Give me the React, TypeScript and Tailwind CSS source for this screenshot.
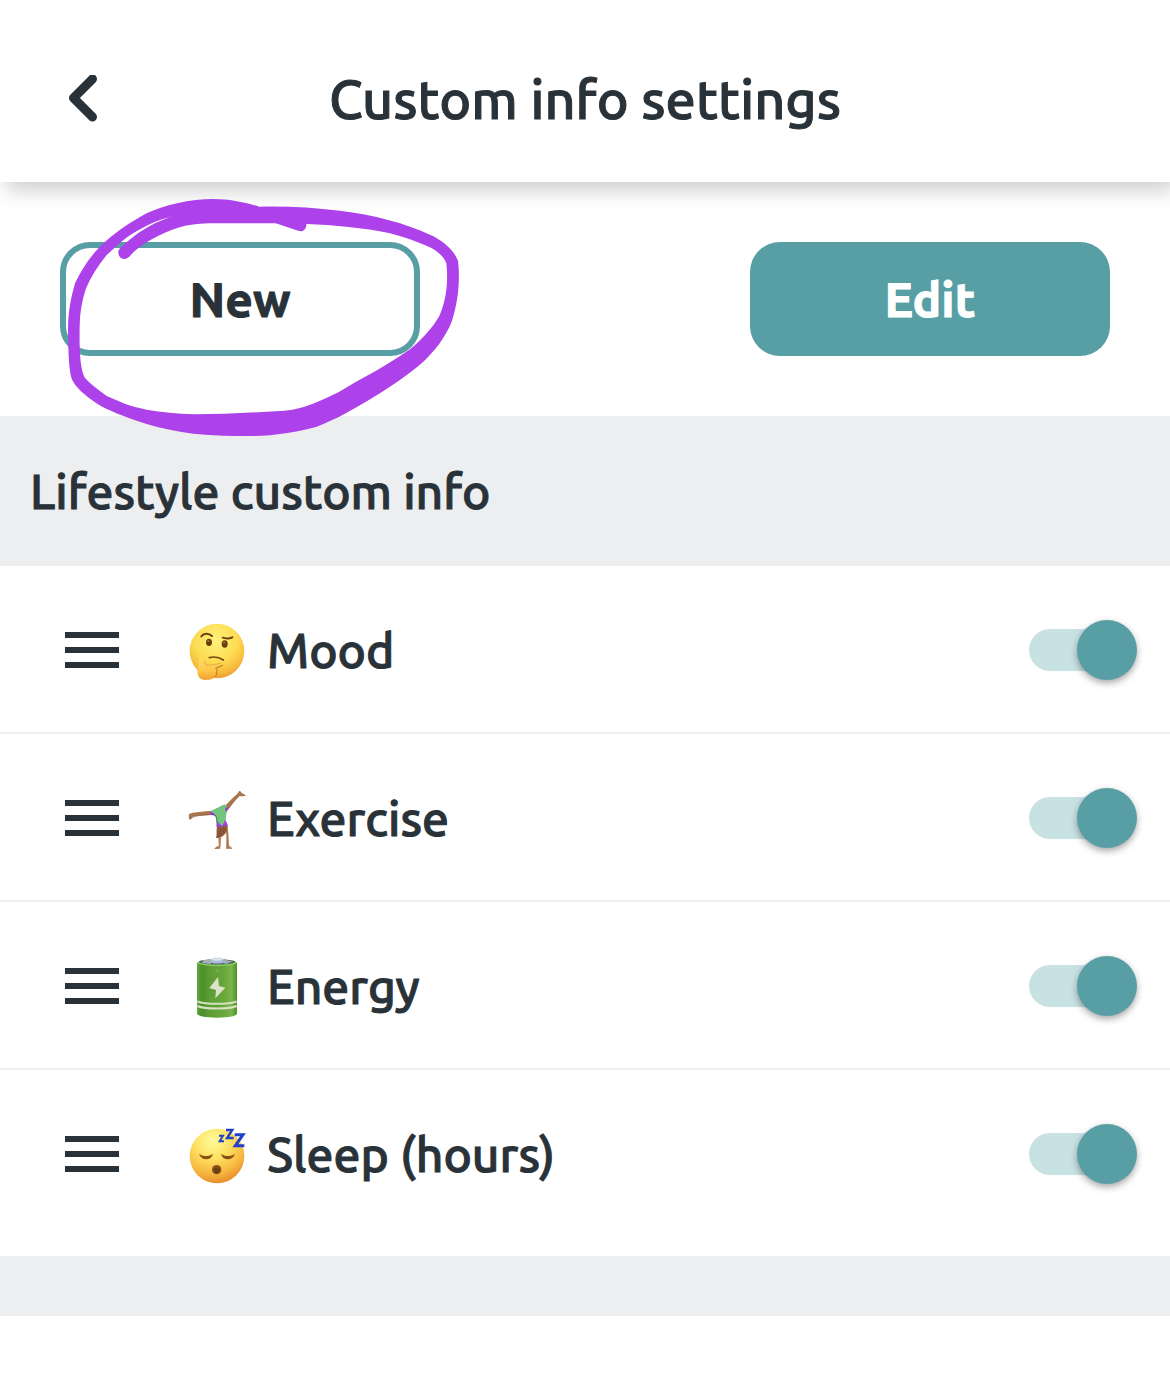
import { useState } from 'react';

const ThinkingFace = () => (
  <svg viewBox="45 24 192 192" className="h-16 w-16 shrink-0" aria-hidden="true">
    <defs>
      <radialGradient id="thinkFace" cx="0.48" cy="0.3" r="0.72">
        <stop offset="0" stopColor="#fff27d" />
        <stop offset="0.55" stopColor="#fcdc52" />
        <stop offset="0.85" stopColor="#f6b83a" />
        <stop offset="1" stopColor="#e8962f" />
      </radialGradient>
      <linearGradient id="thinkHand" x1="0" y1="0" x2="0" y2="1">
        <stop offset="0" stopColor="#ffe06a" />
        <stop offset="0.6" stopColor="#fcc548" />
        <stop offset="1" stopColor="#ee9f30" />
      </linearGradient>
    </defs>
    <circle cx="141" cy="123" r="82" fill="url(#thinkFace)" />
    <ellipse cx="117" cy="97" rx="9" ry="11" fill="#6b3c0b" />
    <ellipse cx="164" cy="102" rx="9" ry="11" fill="#6b3c0b" />
    <circle cx="115" cy="93" r="3" fill="#a57432" />
    <circle cx="162" cy="98" r="3" fill="#a57432" />
    <path d="M94 79 C101 69 116 68 126 78" fill="none" stroke="#6f400c" strokeWidth="6" strokeLinecap="round" />
    <path d="M158 83 C167 86 178 86 187 82" fill="none" stroke="#6f400c" strokeWidth="6" strokeLinecap="round" />
    <path d="M118 143 C132 139 148 142 160 150" fill="none" stroke="#7a480f" strokeWidth="5" strokeLinecap="round" />
    <path
      d="M87 148 C90 139 100 141 102 150 L107 164 C122 166 139 162 154 159 C162 158 162 166 154 169 L137 175 C143 179 141 184 138 186 C142 191 140 197 135 199 C133 207 121 210 106 210 C88 209 80 197 83 179 C85 168 88 160 87 148 Z"
      fill="url(#thinkHand)"
    />
    <path d="M102 152 L107 165 C122 167 139 163 154 159" fill="none" stroke="#e09a2f" strokeWidth="2" />
    <path d="M158 166 L137 175 C143 179 141 184 138 186 C142 191 140 197 135 199" fill="none" stroke="#b86c18" strokeWidth="3" strokeLinecap="round" />
  </svg>
);

const Cartwheel = () => (
  <svg viewBox="45 18 192 192" className="h-16 w-16 shrink-0" aria-hidden="true">
    <defs>
      <linearGradient id="skin" x1="0" y1="0" x2="1" y2="0">
        <stop offset="0" stopColor="#9b6743" />
        <stop offset="1" stopColor="#c9926a" />
      </linearGradient>
    </defs>
    <path d="M122 92 C103 94 83 96 69 98 L58 101 C55 107 56 114 60 120 C64 117 65 112 72 109 C90 106 107 106 124 104 Z" fill="#a8754f" />
    <path d="M60 118 C64 110 90 104 122 104" fill="none" stroke="#805133" strokeWidth="2" />
    <path d="M161 84 C175 67 188 53 201 43 L207 34 C210 32 213 35 214 38 C219 42 225 43 228 46 C223 50 214 48 207 49 C194 60 182 78 171 92 Z" fill="#a8754f" />
    <path d="M207 49 C194 60 182 78 171 92" fill="none" stroke="#805133" strokeWidth="2" />
    <path d="M141 139 C144 158 146 181 146 197 C140 200 134 203 133 207 L151 206 C154 187 153 161 156 139 Z" fill="url(#skin)" />
    <path d="M164 136 C171 157 169 181 169 198 L168 206 L187 207 C187 202 179 200 177 196 C176 171 175 153 172 134 Z" fill="url(#skin)" />
    <path d="M120 94 C135 88 150 78 165 73 L174 83 C170 99 167 108 167 124 L172 138 L153 146 L139 139 C142 126 140 112 134 106 L123 104 Z" fill="#73c47c" />
    <path d="M119 95 C126 95 132 99 137 107 L123 105 Z M166 83 L175 81 L170 95 C167 93 165 88 166 83 Z" fill="#9b32dd" />
    <path d="M140 123 L153 135 L167 121 L174 138 L162 144 L140 141 Z" fill="#a13ce6" />
    <path d="M147 127 L156 138 L164 126 Z" fill="#73c47c" />
    <path d="M135 105 C140 112 141 119 141 127" fill="none" stroke="#2c6b48" strokeWidth="3" />
    <path d="M141 140 C151 139 155 144 164 136 L172 140 C171 155 165 166 154 170 L138 175 C142 164 138 151 141 140 Z" fill="#8d5b38" />
    <path d="M151 146 C154 156 146 163 141 173 M162 144 C164 157 153 164 144 172" fill="none" stroke="#6c4127" strokeWidth="2" />
  </svg>
);

const Battery = () => (
  <svg viewBox="45 27 192 192" className="h-16 w-16 shrink-0" aria-hidden="true">
    <defs>
      <linearGradient id="cell" x1="0" y1="0" x2="1" y2="0">
        <stop offset="0" stopColor="#64a83c" />
        <stop offset="0.12" stopColor="#4c8e2b" />
        <stop offset="0.3" stopColor="#5d9c35" />
        <stop offset="0.65" stopColor="#67a63a" />
        <stop offset="0.86" stopColor="#7bb54b" />
        <stop offset="1" stopColor="#4f902a" />
      </linearGradient>
    </defs>
    <path d="M81 54 C85 42 197 42 201 54 L201 206 C195 222 87 222 81 206 Z" fill="url(#cell)" />
    <ellipse cx="141" cy="53" rx="58" ry="10" fill="#88dc59" />
    <ellipse cx="141" cy="51" rx="54" ry="8" fill="#59636a" />
    <path d="M101 46 L123 43 L123 57 L95 54 Z M161 44 L187 49 L170 56 L160 55 Z" fill="#a7b2b7" />
    <path d="M123 43 C126 37 156 37 160 43 L162 52 C155 57 128 57 122 52 Z" fill="#a9bfdc" />
    <ellipse cx="141" cy="43" rx="18" ry="4" fill="#dce3ec" />
    <path d="M136 77 H146 M141 72 V82" stroke="#7fae5b" strokeWidth="3" />
    <path d="M144 96 L118 129 L138 135 L136 160 L166 128 L147 123 Z" fill="#dce3cb" />
    <path d="M82 169 C105 179 177 179 200 169 M82 183 C105 193 177 193 200 183" fill="none" stroke="#d5e2c2" strokeWidth="6" />
    <path d="M136 207 H147" stroke="#78a755" strokeWidth="3" />
  </svg>
);

const SleepingFace = () => (
  <svg viewBox="45 21 192 192" className="h-16 w-16 shrink-0" aria-hidden="true">
    <defs>
      <radialGradient id="sleepFace" cx="0.42" cy="0.22" r="0.8">
        <stop offset="0" stopColor="#fffb99" />
        <stop offset="0.4" stopColor="#fee264" />
        <stop offset="0.75" stopColor="#f7b840" />
        <stop offset="1" stopColor="#e58a2a" />
      </radialGradient>
    </defs>
    <circle cx="141" cy="123" r="82" fill="url(#sleepFace)" />
    <path d="M87 116 C98 125 117 126 129 116 C124 138 94 138 87 116 Z M153 116 C165 126 183 125 195 116 C188 138 158 138 153 116 Z" fill="#8b500f" />
    <circle cx="140" cy="164" r="14" fill="#8a5318" />
    <circle cx="140" cy="166" r="9" fill="#694014" />
    <g fill="none" stroke="#213fc8" strokeWidth="6">
      <path d="M147 62 H159 L149 79 H162" />
      <path d="M168 45 H187 L171 69 H191" strokeWidth="7" />
      <path d="M194 59 H219 L196 92 H223" strokeWidth="9" />
    </g>
  </svg>
);

const items = [
  { id: 'mood', label: 'Mood', icon: <ThinkingFace /> },
  { id: 'exercise', label: 'Exercise', icon: <Cartwheel /> },
  { id: 'energy', label: 'Energy', icon: <Battery /> },
  { id: 'sleep', label: 'Sleep (hours)', icon: <SleepingFace /> },
];

// Hand-drawn ring around the "New" button
const Scribble = () => (
  <svg viewBox="0 0 1320 810" className="pointer-events-none absolute -left-5 -top-[62px] z-20 h-[270px] w-[440px] max-w-none" aria-hidden="true">
    <path
      fill="#ad42eb"
      fillRule="evenodd"
      d="M84 450 C84 400 92 355 105 310 C124 270 148 234 174 206 C220 160 270 127 320 100 C375 74 450 57 520 57 C570 57 615 67 658 80 C742 78 820 83 900 92 C1000 104 1095 129 1170 164 C1212 183 1240 209 1254 242 C1260 292 1257 360 1235 425 C1215 474 1185 511 1150 545 C1103 586 1054 618 1000 652 C945 685 888 719 830 740 C768 758 705 766 640 768 C580 768 520 767 460 761 C413 755 366 746 320 732 C270 716 226 701 184 679 C148 655 114 632 98 602 C86 580 85 510 84 450 Z
      M119 440 C119 400 126 362 138 325 C153 291 174 256 200 225 C220 207 240 188 262 171 C305 142 350 120 402 108 C350 123 305 149 268 180 C256 189 248 197 240 205 C229 216 237 238 255 237 C268 235 273 222 285 212 C328 177 380 151 435 137 C460 134 485 130 510 130 H707 L777 153 C791 156 800 145 799 132 C885 135 968 143 1050 160 C1093 172 1132 185 1170 202 C1197 216 1213 232 1219 250 C1225 302 1220 358 1198 408 C1175 447 1144 480 1110 508 C1064 540 1018 568 970 593 C935 612 904 633 870 649 C837 664 805 680 770 686 C753 690 737 692 720 693 C634 698 545 703 460 703 C412 701 365 697 320 689 C296 684 273 679 250 670 C233 661 216 656 200 648 C177 630 154 615 137 596 C119 574 118 495 119 440 Z"
    />
  </svg>
);

export default function App() {
  const [enabled, setEnabled] = useState<{ [key: string]: boolean }>({
    mood: true,
    exercise: true,
    energy: true,
    sleep: true,
  });

  const toggle = (id: string) => setEnabled(prev => ({ ...prev, [id]: !prev[id] }));

  return (
    <div className="min-h-screen bg-white font-['Ubuntu','Noto_Sans',sans-serif] text-[#293238] [-webkit-text-stroke:1px_currentColor]">
      <header className="relative z-10 grid grid-cols-[1fr_auto_1fr] items-center bg-white px-15 pb-10 pt-14 shadow-[6px_8px_20px_rgba(0,0,0,0.2)]">
        <button aria-label="Back" className="flex h-12 w-12 items-center justify-center">
          <svg viewBox="0 0 48 48" className="h-12 w-12" fill="none" stroke="currentColor" strokeWidth="9" strokeLinecap="round" strokeLinejoin="round">
            <path d="M32.5 4 L13.5 23 L32.5 42" />
          </svg>
        </button>
        <h1 className="text-[54px] font-medium leading-[86px]">Custom info settings</h1>
      </header>

      <main>
        <div className="flex justify-between p-15">
          <div className="relative">
            <button className="h-[114px] w-[360px] rounded-[30px] border-6 border-[#589fa5] bg-white text-5xl font-bold">New</button>
            <Scribble />
          </div>
          <button className="h-[114px] w-[360px] rounded-[30px] bg-[#589fa5] text-5xl font-bold text-white">Edit</button>
        </div>

        <section>
          <h2 className="bg-[#edeeef] px-[30px] py-10 text-5xl font-medium leading-[70px]">Lifestyle custom info</h2>
          <ul className="pb-[18px]">
            {items.map(item => (
              <li key={item.id} className="flex h-[168px] items-center border-b-2 border-[#edeeef] pl-[65px] pr-[39px] pt-0.5 last:border-transparent">
                <button aria-label={`Reorder ${item.label}`} className="mr-[66px] flex w-[54px] flex-col gap-[9px]">
                  <span className="h-1.5 w-full bg-[#293238]" />
                  <span className="h-1.5 w-full bg-[#293238]" />
                  <span className="h-1.5 w-full bg-[#293238]" />
                </button>
                {item.icon}
                <label htmlFor={item.id} className="ml-[18px] flex-1 text-5xl font-medium">{item.label}</label>
                <input
                  id={item.id}
                  type="checkbox"
                  role="switch"
                  checked={enabled[item.id]}
                  onChange={() => toggle(item.id)}
                  className="flex h-[42px] w-[102px] shrink-0 cursor-pointer appearance-none items-center rounded-full bg-gray-300 before:block before:h-15 before:w-15 before:shrink-0 before:rounded-full before:bg-gray-100 before:shadow-[0_3px_7px_rgba(0,0,0,0.35)] checked:bg-[#c8e1e2] checked:before:ml-12 checked:before:bg-[#589fa5]"
                />
              </li>
            ))}
          </ul>
        </section>
        <div className="h-15 bg-[#edeeef]" />
      </main>
    </div>
  );
}
